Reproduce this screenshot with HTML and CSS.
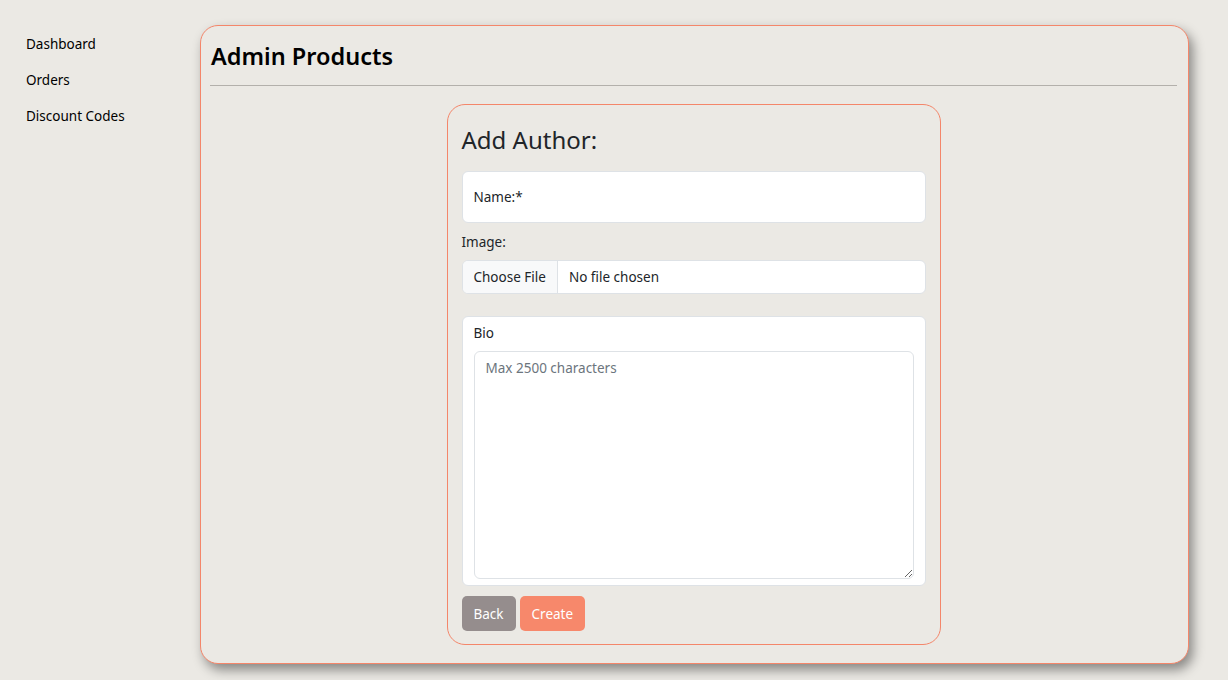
FILE: index.html
```html
<!DOCTYPE html>
<html>
<head>
<meta charset="utf-8">
<link rel="stylesheet" href="styles.css">
</head>
<body>
<div class="layout">
  <nav class="sidebar">
    <a class="nav-link" href="#">Dashboard</a>
    <a class="nav-link" href="#">Orders</a>
    <a class="nav-link" href="#">Discount Codes</a>
  </nav>
  <main class="panel">
    <h2 class="panel-title">Admin Products</h2>
    <hr class="divider">
    <form class="form-card">
      <h3 class="form-title">Add Author:</h3>
      <div class="floating">
        <span class="floating-label">Name:*</span>
      </div>
      <label class="field-label">Image:</label>
      <div class="file-input">
        <span class="file-btn">Choose File</span>
        <span class="file-name">No file chosen</span>
      </div>
      <div class="bio-box">
        <div class="bio-label">Bio</div>
        <textarea class="bio-text" placeholder="Max 2500 characters"></textarea>
      </div>
      <div class="actions">
        <button type="button" class="btn btn-back">Back</button>
        <button type="button" class="btn btn-create">Create</button>
      </div>
    </form>
  </main>
</div>
</body>
</html>
```

FILE: styles.css
```css
* { box-sizing: border-box; }
html, body {
  margin: 0;
  background: #ebe9e4;
  font-family: "Noto Sans", "Open Sans", sans-serif;
  color: #212529;
}
.layout {
  display: flex;
  align-items: flex-start;
  height: 680px;
}
.sidebar {
  width: 200px;
  flex: none;
  display: flex;
  flex-direction: column;
  padding: 26px 10px 0;
}
.nav-link {
  display: block;
  padding: 7px 16px;
  font-size: 13.5px;
  line-height: 22px;
  color: #000;
  text-decoration: none;
}
.panel {
  width: 989px;
  height: 639px;
  margin-top: 25px;
  background: #ebe9e4;
  border: 1px solid #f4866a;
  border-radius: 18px;
  box-shadow: 4px 6px 12px rgba(0,0,0,0.42);
  padding: 12px 11px 0 9px;
  display: flex;
  flex-direction: column;
  align-items: center;
}
.panel-title {
  align-self: stretch;
  margin: 0 0 0 1px;
  font-size: 23.5px;
  font-weight: 600;
  line-height: 37px;
  color: #000;
}
.divider {
  align-self: stretch;
  margin: 10px 0 18px;
  border: 0;
  border-top: 1px solid #b3b0ab;
}
.form-card {
  width: 494px;
  border: 1px solid #f4866a;
  border-radius: 18px;
  padding: 18px 14px 13px;
  display: flex;
  flex-direction: column;
}
.form-title {
  margin: 0 0 14px;
  font-size: 24px;
  font-weight: 400;
  line-height: 34px;
  color: #212529;
}
.floating {
  height: 52px;
  background: #fff;
  border: 1px solid #dee2e6;
  border-radius: 6px;
  padding: 0 11px;
  display: flex;
  align-items: center;
}
.floating-label {
  font-size: 13.5px;
  color: #212529;
}
.field-label {
  margin: 9px 0 8px;
  font-size: 13.5px;
  line-height: 20px;
  color: #212529;
}
.file-input {
  height: 34px;
  display: flex;
  background: #fff;
  border: 1px solid #dee2e6;
  border-radius: 6px;
  overflow: hidden;
  font-size: 13.5px;
}
.file-btn {
  background: #f8f9fa;
  border-right: 1px solid #dee2e6;
  padding: 0 11px;
  display: flex;
  align-items: center;
}
.file-name {
  padding: 0 11px;
  display: flex;
  align-items: center;
}
.bio-box {
  margin-top: 22px;
  height: 270px;
  background: #fff;
  border: 1px solid #dee2e6;
  border-radius: 6px;
  padding: 6px 11px 6px;
  display: flex;
  flex-direction: column;
}
.bio-label {
  font-size: 13.5px;
  line-height: 20px;
  margin-bottom: 8px;
}
.bio-text {
  flex: 1;
  width: 100%;
  border: 1px solid #dee2e6;
  border-radius: 6px;
  padding: 7px 11px;
  font-family: inherit;
  font-size: 13.5px;
  color: #212529;
  resize: vertical;
  outline: none;
}
.bio-text::placeholder { color: #6c757d; }
.actions {
  display: flex;
  gap: 4px;
  margin-top: 10px;
}
.btn {
  height: 35px;
  border: 0;
  border-radius: 5px;
  padding: 0 12px;
  font-family: inherit;
  font-size: 13.5px;
  color: #fff;
}
.btn-back { background: #958d8d; }
.btn-create { background: #f7886b; }
```
